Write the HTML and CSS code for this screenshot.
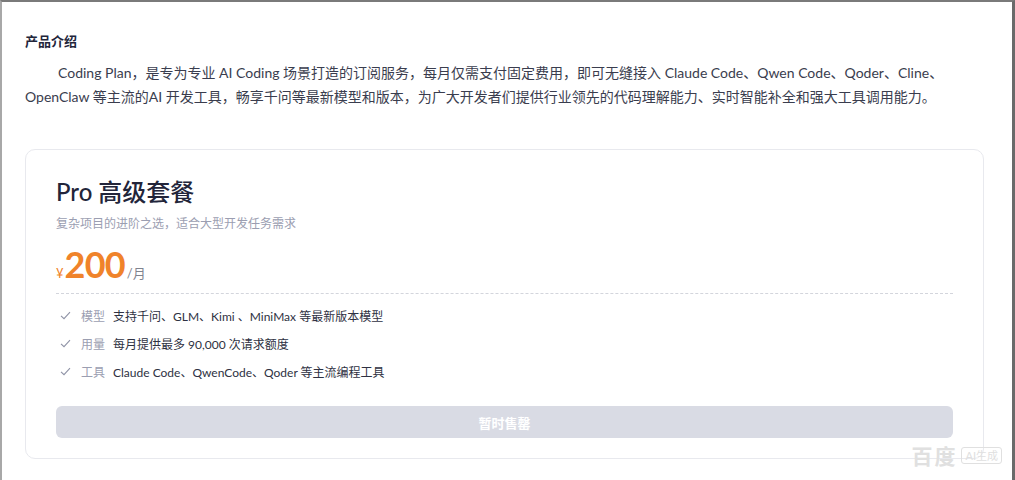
FILE: index.html
```
<!DOCTYPE html>
<html lang="zh-CN">
<head>
	<meta charset="UTF-8">
	<title>Coding Plan - Pro 高级套餐</title>
	<link rel="stylesheet" href="styles.css">
</head>
<body>
	<div class="frame">
		<!-- Product intro -->
		<h3 class="intro-title">产品介绍</h3>
		<p class="intro-text">Coding Plan，是专为专业 AI Coding 场景打造的订阅服务，每月仅需支付固定费用，即可无缝接入 Claude Code、Qwen Code、Qoder、Cline、OpenClaw 等主流的AI 开发工具，畅享千问等最新模型和版本，为广大开发者们提供行业领先的代码理解能力、实时智能补全和强大工具调用能力。</p>

		<!-- Plan card -->
		<div class="plan-card">
			<h2 class="plan-name">Pro 高级套餐</h2>
			<div class="plan-desc">复杂项目的进阶之选，适合大型开发任务需求</div>
			<div class="plan-price">
				<span class="currency">¥</span><span class="amount">200</span><span class="unit">/月</span>
			</div>
			<ul class="plan-features">
				<li>
					<svg class="check" width="11" height="9" viewBox="0 0 11 9"><path d="M1 4.8 L4 7.6 L10 1.2" fill="none" stroke="#8f93a6" stroke-width="1.1"/></svg>
					<span class="label">模型</span>
					<span class="value">支持千问、GLM、Kimi 、MiniMax 等最新版本模型</span>
				</li>
				<li>
					<svg class="check" width="11" height="9" viewBox="0 0 11 9"><path d="M1 4.8 L4 7.6 L10 1.2" fill="none" stroke="#8f93a6" stroke-width="1.1"/></svg>
					<span class="label">用量</span>
					<span class="value">每月提供最多 90,000 次请求额度</span>
				</li>
				<li>
					<svg class="check" width="11" height="9" viewBox="0 0 11 9"><path d="M1 4.8 L4 7.6 L10 1.2" fill="none" stroke="#8f93a6" stroke-width="1.1"/></svg>
					<span class="label">工具</span>
					<span class="value">Claude Code、QwenCode、Qoder 等主流编程工具</span>
				</li>
			</ul>
			<button class="buy-btn" disabled>暂时售罄</button>
		</div>

		<!-- Watermark -->
		<div class="watermark"><span class="wm-logo">百度</span><span class="wm-tag">AI生成</span></div>
	</div>
</body>
</html>
```

FILE: styles.css
```
* {
	margin: 0;
	padding: 0;
	box-sizing: border-box;
}

body {
	font-family: 'Lato', 'Noto Sans CJK SC', sans-serif;
	background: #FFF;
	color: #333;
	overflow: hidden;
}

/* Window frame */
.frame {
	position: relative;
	height: 100vh;
	border-top: 2px solid #7a7a7a;
	border-left: 2px solid #a8a8a8;
	border-right: 3px solid #6a6a6a;
	padding: 29px 28px 0 23px;
}

/* Intro section */
.intro-title {
	font-size: 13px;
	font-weight: 700;
	line-height: 20px;
	color: #22253a;
	margin-bottom: 10px;
}

.intro-text {
	font-size: 14px;
	line-height: 24px;
	color: #3a3d4e;
	text-indent: 33px;
	margin-bottom: 40px;
}

/* Plan card */
.plan-card {
	border: 1px solid #e8e9ee;
	border-radius: 10px;
	padding: 26px 30px 20px 30px;
}

.plan-name {
	font-size: 24px;
	font-weight: 500;
	line-height: 32px;
	color: #22253a;
}

.plan-desc {
	font-size: 12px;
	line-height: 18px;
	color: #9b9eb1;
	margin-top: 7px;
}

.plan-price {
	margin-top: 9px;
	height: 44px;
	line-height: 44px;
	color: #f0832a;
}

.plan-price .currency {
	font-size: 13px;
	margin-right: 1px;
}

.plan-price .amount {
	font-size: 36px;
	font-weight: 700;
	letter-spacing: -0.8px;
}

.plan-price .unit {
	font-size: 13px;
	color: #80838f;
	margin-left: 2px;
}

.plan-features {
	list-style: none;
	margin-top: 7px;
	border-top: 1px dashed #d3d5dc;
	padding-top: 7px;
}

.plan-features li {
	display: flex;
	align-items: center;
	height: 28px;
	font-size: 12px;
}

.plan-features .check {
	margin-left: 4px;
	margin-right: 10px;
}

.plan-features .label {
	color: #9b9eb1;
	margin-right: 8px;
}

.plan-features .value {
	color: #2e3142;
}

.buy-btn {
	display: block;
	width: 100%;
	height: 32px;
	margin-top: 21px;
	border: none;
	border-radius: 6px;
	background-color: #d9dbe4;
	color: #FFF;
	font-family: inherit;
	font-size: 13px;
	font-weight: 700;
}

/* Watermark in the corner */
.watermark {
	position: absolute;
	right: 10px;
	bottom: 10px;
	display: flex;
	align-items: center;
	gap: 4px;
	color: #e0e0e0;
}

.wm-logo {
	font-size: 21px;
	font-weight: 700;
	letter-spacing: 2px;
}

.wm-tag {
	font-size: 11px;
	border: 1px solid #e0e0e0;
	border-radius: 3px;
	padding: 0 3px;
	line-height: 15px;
}
```
